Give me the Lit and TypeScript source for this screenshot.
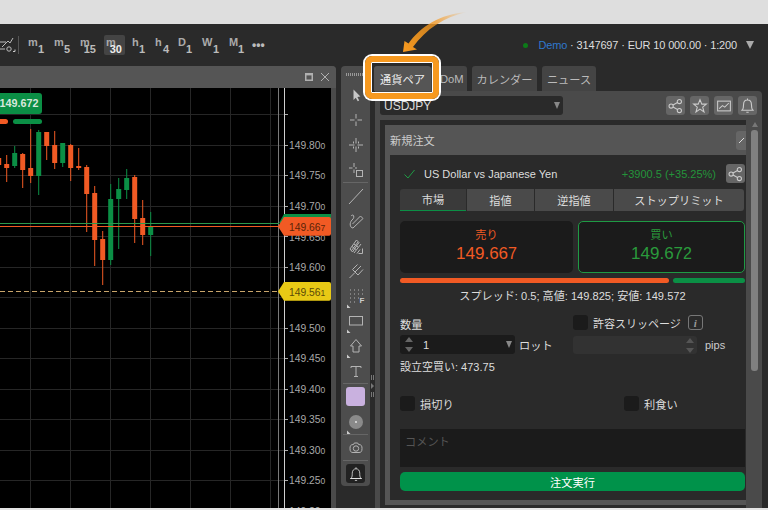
import { LitElement, html, css, svg } from "lit";
import { customElement } from "lit/decorators.js";

const ORANGE = "#f15a24";
const GREEN = "#0b8f45";
// x, wickTop, wickBottom, bodyTop, bodyBottom, up
const CANDLES: [number, number, number, number, number, number][] = [
  [-1.3, 150, 170, 158, 165, 0],
  [6.7, 155, 182, 164, 168, 0],
  [14.7, 146, 168, 153, 166, 1],
  [22.7, 153, 188, 154, 170, 0],
  [30.7, 129, 183, 168, 176, 0],
  [38.7, 130, 195, 132, 176, 1],
  [46.7, 132, 160, 132, 146, 0],
  [54.7, 131, 169, 145, 163, 0],
  [62.7, 143, 167, 143, 163, 1],
  [70.7, 144, 181, 145, 168, 0],
  [78.7, 148, 170, 166, 168, 0],
  [86.7, 165, 232, 167, 194, 0],
  [94.7, 186, 266, 193, 240, 0],
  [102.7, 231, 285, 239, 260, 0],
  [110.7, 184, 265, 199, 260, 1],
  [118.7, 178, 249, 189, 199, 1],
  [126.7, 169, 199, 178, 190, 1],
  [134.7, 175, 243, 177, 219, 0],
  [142.7, 200, 245, 218, 235, 0],
  [150.7, 212, 256, 227, 235, 1],
];
const GRID_X = [30.5, 70.5, 110.5, 150.5, 190.5, 230.5, 270.5];
const GRID_Y = [114, 145, 175, 206, 236, 267, 297, 328, 358, 389, 419, 450, 480];
const LABELS: [number, string][] = [
  [145, "149.80"], [175, "149.75"], [206, "149.70"], [237, "149.65"], [267, "149.60"],
  [328, "149.50"], [358, "149.45"], [389, "149.40"], [419, "149.35"],
  [450, "149.30"], [480, "149.25"], [511, "149.20"],
];
const TIMEFRAMES = [
  { l: "m", s: "1", w: 21, p: 26 }, { l: "m", s: "5", w: 21, p: 26 }, { l: "m", s: "15", w: 21, p: 26 },
  { l: "m", s: "30", w: 21, p: 26, on: true }, { l: "h", s: "1", w: 18, p: 23 }, { l: "h", s: "4", w: 19, p: 23 },
  { l: "D", s: "1", w: 19, p: 24 }, { l: "W", s: "1", w: 22, p: 27 }, { l: "M", s: "1", w: 20, p: 24 },
];

const corner = svg`<path d="M3 24V20.5L6.5 24Z" fill="#ccc" stroke="none"/>`;
const TOOLS = [
  svg`<path d="M9.5 6.5V17L11.8 14.8L13.7 18.2L15.2 17.4L13.4 14L16.4 13.6Z" fill="#c8c8c8" stroke="none"/>`,
  svg`<path d="M12 6V10.5M12 13.5V18M6 12H10.5M13.5 12H18"/>`,
  svg`<path d="M12 5V10.5M12 13.5V19M5 12H10.5M13.5 12H19M9.5 8.5V10.5M14.5 8.5V10.5M9.5 13.5V15.5M14.5 13.5V15.5"/>`,
  svg`<path d="M10 5V9M10 11.5V15M5 10H8.5M11 10H13"/><rect x="12.5" y="12.5" width="6" height="6"/>`,
  svg`<path d="M5 20L19 5"/>`,
  svg`<path d="M7 7C10 4 11 9 8 11C5 14 6 19 9 19L19 9.5L16.5 7L8.5 15"/>`,
  svg`<path d="M6 15L12.5 6L15 8.5L8.5 18ZM8 12.5L12 15.5M10 10L14 13M7.5 16.5L14 8M10 19L17 10M13 19.5L16 15.5M14.5 19.5H18.5V14.5"/>`,
  svg`<path d="M5.5 19L11 13.5M8.5 10.5L14 16M8.5 10.5L13.5 5.5M11 13L17 7M14 16L19 10.5"/>`,
  svg`<path d="M6 6H7M10 6H11M14 6H15M18 6H19M6 10H7M10 10H11M14 10H15M18 10H19M6 14H7M10 14H11M14 14H15M10 18H11M6 18H7" stroke-width="1.2"/><text x="15.5" y="19" font-size="8" font-weight="700" fill="#ccc" stroke="none" font-family="Liberation Sans">F</text>${corner}`,
  svg`<rect x="5.5" y="7.5" width="13" height="8.5"/>${corner}`,
  svg`<path d="M12 5.5L17.5 12H15V18H9V12H6.5Z"/>${corner}`,
];
const share = svg`<circle cx="5.5" cy="12" r="2.8"/><circle cx="16.5" cy="6" r="2.8"/><circle cx="16.5" cy="18" r="2.8"/><path d="M8 10.6L14 7.4M8 13.4L14 16.6"/>`;
const star = svg`<path d="M12 3.5L14.4 9.5H20.5L15.6 13.5L17.4 20L12 16.2L6.6 20L8.4 13.5L3.5 9.5H9.6Z"/>`;
const chart = svg`<rect x="3.5" y="5.5" width="17" height="13"/><path d="M5.5 15.5L10 11.5L13 13.5L18.5 8"/>`;
const bell = svg`<path d="M5.5 18C7 15.5 7 14 7 11C7 7.5 9 5 12 5C15 5 17 7.5 17 11C17 14 17 15.5 18.5 18ZM4 18H20M12 3V5M10.5 20.5H13.5"/>`;
const camera = svg`<path d="M9.5 8.5L10.3 7H13.7L14.5 8.5C17.5 8.5 18 10 18 12.5C18 15.5 17 16.5 15 16.5H9C7 16.5 6 15.5 6 12.5C6 10 6.5 8.5 9.5 8.5Z"/><circle cx="12" cy="12.5" r="2.7"/>`;

@customElement("app-root")
export class AppRoot extends LitElement {
  static styles = css`
    :host { display: block; width: 768px; height: 510px; overflow: hidden; font-family: "Liberation Sans", "Noto Sans CJK JP", sans-serif; font-size: 11.2px; color: #ddd; }
    * { box-sizing: border-box; }
    .page { position: relative; width: 768px; height: 510px; display: flex; flex-direction: column; background: #2a2a2a; overflow: hidden; }
    .top { height: 24px; background: #dedede; flex: none; }
    .bar { height: 42px; flex: none; display: flex; align-items: center; padding-right: 14px; }
    .drawbtn { width: 19px; height: 18px; border-right: 1px solid #555; margin-right: 7px; flex: none; overflow: hidden; }
    .drawbtn svg { display: block; fill: none; stroke: #bbb; }
    .tf { height: 20px; padding: 2px 0 0 2px; flex: none; border-radius: 2px; font-weight: 700; font-size: 11px; color: #aaa; line-height: 10px; }
    .tf.on { background: #444; }
    .tf b { display: block; text-align: right; padding-right: 3px; margin-top: -3px; color: #bbb; line-height: 10px; }
    .tf.on b { color: #eee; }
    .more { color: #bbb; font-weight: 700; font-size: 12px; letter-spacing: 0; margin-left: 1px; line-height: 10px; }
    .acct { margin-left: auto; display: flex; align-items: center; font-size: 11px; letter-spacing: -0.15px; color: #ddd; }
    .dot { width: 5px; height: 5px; border-radius: 50%; background: #0c7a18; margin-right: 10px; }
    .demo { color: #2f78cc; }
    .caret { width: 0; height: 0; border-left: 4px solid transparent; border-right: 4px solid transparent; border-top: 8px solid #aaa; margin-left: 9px; }
    .main { flex: 1; display: flex; min-height: 0; }
    .foot { height: 2px; flex: none; background: #e4e4e4; }

    .chart { width: 336px; flex: none; background: #4a4a4a; border-top-right-radius: 4px; overflow: hidden; display: flex; flex-direction: column; }
    .wtitle { height: 22px; flex: none; background: #555; display: flex; justify-content: flex-end; align-items: center; gap: 8px; padding-right: 7px; }
    .wtitle svg { display: block; fill: none; stroke: #b0b0b0; }
    .plot { display: block; width: 331px; height: 420px; background: #000; }

    .tools { width: 29px; height: 420px; flex: none; margin-left: 5px; background: #4d4d4d; border-radius: 4px; display: flex; flex-direction: column; align-items: center; }
    .handle { height: 16px; width: 20px; flex: none; display: flex; align-items: center; }
    .handle i { display: block; width: 100%; height: 3px; background: repeating-linear-gradient(90deg, #999 0 1px, transparent 1px 2px); }
    .tool { height: 25px; flex: none; display: flex; align-items: center; justify-content: center; width: 100%; }
    .tool svg { display: block; fill: none; stroke: #b4b4b4; stroke-width: 1; }
    .sep { height: 1px; width: 25px; flex: none; background: #666; }
    .swatch { width: 19px; height: 19px; background: #c9b1df; border-radius: 3px; }
    .belltool { width: 19px; height: 19px; background: #222; border-radius: 3px; display: flex; align-items: center; justify-content: center; }
    .belltool svg { stroke: #eee; }
    .split { width: 5px; flex: none; position: relative; display: flex; flex-direction: column; align-items: center; padding-top: 309px; }
    .split i { width: 3px; height: 5px; border-left: 1px solid #777; border-right: 1px solid #777; flex: none; }
    .split u { width: 0; height: 0; border-left: 3px solid #777; border-top: 3px solid transparent; border-bottom: 3px solid transparent; margin: 3px 0; flex: none; }

    .right { width: 387px; flex: none; display: flex; flex-direction: column; }
    .tabs { height: 25px; flex: none; display: flex; padding-left: 0; }
    .tab { height: 25px; display: flex; align-items: center; justify-content: center; background: #444; color: #bbb; border-radius: 3px 3px 0 0; flex: none; margin-right: 5px; }
    .tab.sel { background: #555; color: #eee; width: 57px; margin-left: -1px; margin-right: 0; }
    .tab.dom { width: 36px; padding-left: 9px; justify-content: flex-start; background: #444; }
    .tab.cal { width: 65px; }
    .tab.news { width: 54px; }
    .panel { flex: 1; min-height: 0; background: #4a4a4a; border-top-right-radius: 4px; padding: 5px 0 0 5px; display: flex; flex-direction: column; }
    .phead { height: 19px; flex: none; display: flex; align-items: center; }
    .select { width: 184px; height: 19px; background: #2a2a2a; border-radius: 3px; display: flex; align-items: center; justify-content: space-between; padding: 0 3px 0 4px; color: #ddd; font-size: 12px; margin-right: 103px; }
    .tri { width: 0; height: 0; border-left: 3.5px solid transparent; border-right: 3.5px solid transparent; border-top: 7px solid #888; }
    .ib { width: 19px; height: 19px; background: #666; border-radius: 3px; margin-right: 5px; display: flex; align-items: center; justify-content: center; flex: none; }
    .ib svg { display: block; fill: none; stroke: #ccc; stroke-width: 1.4; }
    .pbody { flex: 1; min-height: 0; display: flex; margin-top: 5px; }
    .dark { width: 366px; flex: none; background: #2a2a2a; padding: 5px 0 3px 5px; overflow: hidden; }
    .card { height: 380px; background: #555; padding-left: 5px; overflow: hidden; display: flex; flex-direction: column; }
    .ctitle { height: 30px; flex: none; display: flex; align-items: center; color: #ccc; justify-content: space-between; }
    .cbtn { width: 10px; height: 19px; background: #666; border-radius: 3px 0 0 3px; display: flex; align-items: center; overflow: hidden; }
    .cbtn svg { display: block; flex: none; stroke: #ddd; fill: none; }
    .inner { height: 345px; flex: none; background: #2a2a2a; padding: 9px 1px 0 10px; }
    .instr { height: 19px; display: flex; align-items: center; }
    .check-ic { display: block; fill: none; stroke: #1f9a44; flex: none; margin-left: 4px; }
    .instr .name { margin-left: 9px; color: #ddd; font-size: 11px; }
    .instr .pl { margin-left: auto; color: #24943a; font-size: 11px; margin-right: 10px; }
    .instr .ib { margin-right: 0; }
    .otabs { height: 22px; margin-top: 6px; display: flex; gap: 1px; }
    .otab { height: 22px; background: #4a4a4a; color: #ddd; display: flex; align-items: center; justify-content: center; border-radius: 0; flex: none; }
    .otab.first { width: 66px; background: #3a3a3a; border-bottom: 1px solid #0b8f45; border-radius: 3px 0 0 0; padding-bottom: 2px; }
    .otab.b { width: 67px; }
    .otab.c { width: 78px; }
    .otab.d { width: 130px; border-radius: 0 3px 3px 0; }
    .prices { display: flex; gap: 5px; margin-top: 10px; height: 52px; }
    .pbox { background: #1b1b1b; border-radius: 5px; text-align: center; padding-top: 7px; flex: none; }
    .pbox.sell { width: 173px; color: ${css([ORANGE] as any)}; }
    .pbox.buy { width: 167px; color: #2a9a3c; border: 1px solid #1f9a44; padding-top: 6px; }
    .pbox small { display: block; font-size: 11.2px; line-height: 14px; }
    .pbox div { font-size: 17px; line-height: 22px; margin-top: 1px; }
    .pbox div span { font-size: 16px; }
    .bars { display: flex; gap: 4px; height: 5px; margin-top: 5px; }
    .bars i { display: block; height: 5px; border-radius: 3px; }
    .bars .o { width: 269px; background: ${css([ORANGE] as any)}; }
    .bars .g { width: 72px; background: ${css([GREEN] as any)}; }
    .spread { margin-top: 6px; text-align: center; line-height: 14px; color: #ddd; font-size: 11.1px; }
    .form { display: flex; margin-top: 11px; }
    .lcol { width: 173px; flex: none; }
    .rcol { flex: 1; }
    .lbl { margin-top: 3px; line-height: 14px; color: #ddd; padding-top: 1px; height: 14px; }
    .inrow { display: flex; align-items: center; margin-top: 4px; }
    .input { width: 115px; height: 19px; background: #1b1b1b; border-radius: 3px; display: flex; align-items: center; padding: 0 3px 0 5px; flex: none; }
    .spin { width: 8px; height: 15px; flex: none; display: flex; flex-direction: column; justify-content: space-between; }
    .spin i { width: 0; height: 0; border-left: 4px solid transparent; border-right: 4px solid transparent; }
    .spin .u { border-bottom: 5px solid #666; }
    .spin .d { border-top: 5px solid #666; }
    .val { margin-left: 10px; flex: 1; }
    .unit { margin-left: 4px; color: #ddd; }
    .margin { margin-top: 6px; line-height: 14px; font-size: 11px; color: #ddd; }
    .cb { width: 15px; height: 15px; background: #1b1b1b; border-radius: 3px; flex: none; }
    .slip { height: 16px; display: flex; align-items: center; }
    .slip span { margin-left: 5px; font-size: 11px; padding-top: 1px; }
    .info { width: 15px; height: 15px; margin-left: 7px; margin-top: 1px; border: 1px solid #777; border-radius: 3px; color: #999; font: italic 700 11px "Liberation Serif", serif; display: flex; align-items: center; justify-content: center; flex: none; }
    .slipin { height: 18px; margin-top: 6px; display: flex; align-items: center; }
    .slipbox { width: 124px; height: 18px; background: #323232; border-radius: 3px; display: flex; justify-content: flex-end; align-items: center; padding-right: 3px; flex: none; }
    .slipbox .u { border-bottom-color: #555; }
    .slipbox .d { border-top-color: #555; }
    .slipin em { font-style: normal; margin-left: 8px; color: #ccc; font-size: 11px; }
    .checks { display: flex; margin-top: 22px; height: 15px; }
    .check { display: flex; align-items: center; gap: 5px; width: 224px; flex: none; color: #ddd; padding-top: 1px; }
    .check .cb { margin-top: -1px; }
    .comment { height: 38px; margin-top: 18px; background: #1b1b1b; color: #555; padding: 6px 5px; line-height: 14px; }
    .go { height: 19px; margin-top: 5px; background: #00924a; border-radius: 5px; display: flex; align-items: center; justify-content: center; color: #fff; }
    .scroll { width: 7px; flex: none; margin-left: 5px; display: flex; flex-direction: column; align-items: center; }
    .scroll i { width: 0; height: 0; border-left: 3.5px solid transparent; border-right: 3.5px solid transparent; border-bottom: 5px solid #777; margin-top: 2px; }
    .scroll b { display: block; width: 7px; height: 241px; margin-top: 3px; background: #808080; border-radius: 3px; }

    .frame { position: absolute; left: 365px; top: 56px; width: 74px; height: 43px; border: 6px solid #f7991f; border-radius: 7px; box-shadow: 0 0 0 2px #fff, inset 0 0 0 1px #fff; pointer-events: none; }
    .arrow { position: absolute; left: 395px; top: 5px; pointer-events: none; display: block; }
  `;

  private plot() {
    return html`<svg class="plot" viewBox="0 88 331 420" xmlns="http://www.w3.org/2000/svg">
      ${GRID_X.map((x) => svg`<line x1=${x} x2=${x} y1="88" y2="508" stroke="#262626"/>`)}
      ${GRID_Y.map((y) => svg`<line x1="0" x2="285" y1=${y + 0.5} y2=${y + 0.5} stroke="#262626"/>`)}
      <line x1="278.5" x2="278.5" y1="88" y2="508" stroke="#7a7a7a"/>
      <line x1="284.5" x2="284.5" y1="88" y2="508" stroke="#cfcfcf"/>
      ${GRID_Y.map((y) => svg`<line x1="285" x2="288" y1=${y + 0.5} y2=${y + 0.5} stroke="#aaa"/>`)}
      ${LABELS.map(([y, t]) => svg`<text x="289" y=${y + 4} font-size="10.3" fill="#a8a8a8" font-family="Liberation Sans">${t}<tspan font-size="8.5">0</tspan></text>`)}
      ${CANDLES.map(([x, wt, wb, bt, bb, up]) => {
        const c = up ? GREEN : ORANGE;
        return svg`<rect x=${x - 0.5} y=${wt} width="1" height=${wb - wt} fill=${c}/><rect x=${x - 2.5} y=${bt} width="5" height=${bb - bt} fill=${c}/>`;
      })}
      <rect x="-4" y="93" width="46" height="21" rx="3" fill=${GREEN}/>
      <text x="-0.5" y="107" font-size="10.8" font-weight="700" fill="#d8e8dc" font-family="Liberation Sans">149.672</text>
      <rect x="-4" y="119" width="12" height="5" rx="2.5" fill=${ORANGE}/>
      <rect x="13" y="119" width="29" height="5" rx="2.5" fill=${GREEN}/>
      <line x1="0" x2="279" y1="223.5" y2="223.5" stroke="#2c9a4c"/>
      <line x1="0" x2="279" y1="226.5" y2="226.5" stroke=${ORANGE}/>
      <line x1="0" x2="279" y1="291.5" y2="291.5" stroke="#c9a56a" stroke-dasharray="5 3"/>
      <path d="M279 223L284 214H331V224H284Z" fill=${GREEN}/>
      <path d="M278 226.5L284 217H329Q331 217 331 219V233.5Q331 235.7 329 235.7H284Z" fill=${ORANGE}/>
      <text x="289" y="230.5" font-size="10.3" fill="#5a2408" font-family="Liberation Sans">149.66<tspan font-size="8.5">7</tspan></text>
      <path d="M278 291.5L284 282H329Q331 282 331 284V298.5Q331 300.7 329 300.7H284Z" fill="#e8c915"/>
      <text x="289" y="295.5" font-size="10.3" fill="#5a4a08" font-family="Liberation Sans">149.56<tspan font-size="8.5">1</tspan></text>
    </svg>`;
  }

  private icon(body: unknown, size = 24) {
    return html`<svg width=${size} height=${size} viewBox="0 0 24 24">${body}</svg>`;
  }

  render() {
    return html`<div class="page">
      <div class="top"></div>
      <div class="bar">
        <div class="drawbtn"><svg width="18" height="18" viewBox="0 0 18 18"><path d="M-2 6H6M-2 13H5M2 11L8 5L10 7L13 2" /><circle cx="9" cy="13" r="2.2"/><path d="M13 15.5H15V13.5" stroke="#ccc"/></svg></div>
        ${TIMEFRAMES.map((t) => html`<div class="tf ${t.on ? "on" : ""}" style="width:${t.w}px;margin-right:${t.p - t.w}px">${t.l}<b>${t.s}</b></div>`)}
        <div class="more">•••</div>
        <div class="acct"><i class="dot"></i><span class="demo">Demo</span>&nbsp;· 3147697 · EUR 10 000.00 · 1:200<i class="caret"></i></div>
      </div>
      <div class="main">
        <div class="chart">
          <div class="wtitle">
            <svg width="8" height="8" viewBox="0 0 8 8"><rect x=".75" y=".75" width="6.5" height="6.5" stroke-width="1.5"/><rect x="0" y="0" width="8" height="2.4" fill="#b0b0b0" stroke="none"/></svg>
            <svg width="8" height="8" viewBox="0 0 8 8"><path d="M0 0L8 8M8 0L0 8"/></svg>
          </div>
          ${this.plot()}
        </div>
        <div class="tools">
          <div class="handle"><i></i></div>
          ${TOOLS.slice(0, 4).map((b) => html`<div class="tool">${this.icon(b)}</div>`)}
          <div class="sep"></div>
          ${TOOLS.slice(4).map((b) => html`<div class="tool">${this.icon(b)}</div>`)}
          <div class="tool">${this.icon(svg`<path d="M7 7.5H17M12 7.5V17.5M10 17.5H14M7 7.5V9M17 7.5V9"/>`)}</div>
          <div class="sep"></div>
          <div class="tool"><div class="swatch"></div></div>
          <div class="tool">${this.icon(svg`<circle cx="12" cy="12" r="7" fill="#8a8a8a" stroke="none"/><circle cx="12" cy="12" r=".9" fill="#eee" stroke="none"/>${corner}`)}</div>
          <div class="sep"></div>
          <div class="tool">${this.icon(camera)}</div>
          <div class="sep"></div>
          <div class="tool"><div class="belltool">${this.icon(bell, 18)}</div></div>
        </div>
        <div class="split"><i></i><u></u><i></i></div>
        <div class="right">
          <div class="tabs">
            <div class="tab sel">通貨ペア</div>
            <div class="tab dom">DoM</div>
            <div class="tab cal">カレンダー</div>
            <div class="tab news">ニュース</div>
          </div>
          <div class="panel">
            <div class="phead">
              <div class="select">USDJPY<i class="tri"></i></div>
              <div class="ib">${this.icon(share, 18)}</div>
              <div class="ib">${this.icon(star, 18)}</div>
              <div class="ib">${this.icon(chart, 18)}</div>
              <div class="ib">${this.icon(bell, 19)}</div>
            </div>
            <div class="pbody">
              <div class="dark">
                <div class="card">
                  <div class="ctitle">新規注文<div class="cbtn"><svg width="10" height="19" viewBox="0 0 10 19"><path d="M3 12L8 7"/></svg></div></div>
                  <div class="inner">
                    <div class="instr">
                      <svg class="check-ic" width="11" height="10" viewBox="0 0 11 10"><path d="M.5 5.5L4 9L10.5 1"/></svg>
                      <span class="name">US Dollar vs Japanese Yen</span>
                      <span class="pl">+3900.5 (+35.25%)</span>
                      <div class="ib">${this.icon(share, 18)}</div>
                    </div>
                    <div class="otabs">
                      <div class="otab first">市場</div>
                      <div class="otab b">指値</div>
                      <div class="otab c">逆指値</div>
                      <div class="otab d">ストップリミット</div>
                    </div>
                    <div class="prices">
                      <div class="pbox sell"><small>売り</small><div>149.66<span>7</span></div></div>
                      <div class="pbox buy"><small>買い</small><div>149.67<span>2</span></div></div>
                    </div>
                    <div class="bars"><i class="o"></i><i class="g"></i></div>
                    <div class="spread">スプレッド: 0.5; 高値: 149.825; 安値: 149.572</div>
                    <div class="form">
                      <div class="lcol">
                        <div class="lbl">数量</div>
                        <div class="inrow">
                          <div class="input"><div class="spin"><i class="u"></i><i class="d"></i></div><span class="val">1</span><i class="tri"></i></div>
                          <span class="unit">ロット</span>
                        </div>
                        <div class="margin">設立空買い: 473.75</div>
                      </div>
                      <div class="rcol">
                        <div class="slip"><i class="cb"></i><span>許容スリッページ</span><i class="info">i</i></div>
                        <div class="slipin"><div class="slipbox"><div class="spin"><i class="u"></i><i class="d"></i></div></div><em>pips</em></div>
                      </div>
                    </div>
                    <div class="checks">
                      <div class="check"><i class="cb"></i>損切り</div>
                      <div class="check"><i class="cb"></i>利食い</div>
                    </div>
                    <div class="comment">コメント</div>
                    <div class="go">注文実行</div>
                  </div>
                </div>
              </div>
              <div class="scroll"><i></i><b></b></div>
            </div>
          </div>
        </div>
      </div>
      <div class="foot"></div>
      <div class="frame"></div>
      <svg class="arrow" width="80" height="52" viewBox="395 5 80 52">
        <defs><linearGradient id="ag" x1="467" y1="12" x2="405" y2="50" gradientUnits="userSpaceOnUse"><stop offset="0" stop-color="#f7991f" stop-opacity="0"/><stop offset=".45" stop-color="#f7991f" stop-opacity=".75"/><stop offset="1" stop-color="#f7991f"/></linearGradient></defs>
        <path d="M403 52L404.5 41L408.5 43.5C420 27 440 14 467 12C444 17 426 29 413 47L417 49.5Z" fill="url(#ag)"/>
      </svg>
    </div>`;
  }
}
